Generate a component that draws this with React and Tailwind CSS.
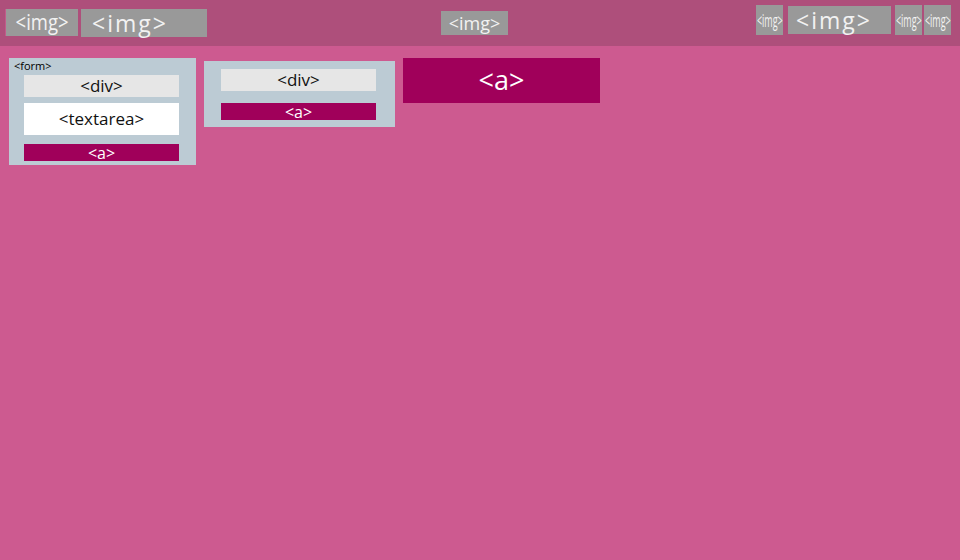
export default function App() {
  const font = { fontFamily: '"Open Sans", "Liberation Sans", sans-serif' };
  return (
    <div className="w-[960px] h-[560px] bg-[#cd5a90] overflow-hidden" style={font}>
      <div className="h-[46px] bg-[#ae4f7b] flex items-start relative">
        <div className="ml-[5px] mt-[9px] w-[73px] h-[27px] bg-[#999999] border-l border-[#c25a8a] flex items-center justify-center text-[#f2f2f2] leading-none overflow-hidden">
          <span className="inline-block text-[21px] scale-x-[0.88]">&lt;img&gt;</span>
        </div>
        <div className="ml-[3px] mt-[9px] w-[126px] h-[28px] bg-[#999999] flex items-center pl-[11px] text-[23px] tracking-[2px] text-[#f2f2f2] leading-none">&lt;img&gt;</div>
        <div className="ml-[234px] mt-[11px] w-[67px] h-[24px] bg-[#999999] flex items-center justify-center text-[18px] text-[#f2f2f2] leading-none">&lt;img&gt;</div>
        <div className="ml-auto mr-[9px] mt-[5px] flex items-start">
          <Tiny />
          <div className="ml-[5px] mt-[1px] w-[103px] h-[28px] bg-[#999999] flex items-center pl-[8px] text-[23px] tracking-[2px] text-[#f2f2f2] leading-none">&lt;img&gt;</div>
          <div className="ml-[4px]"><Tiny /></div>
          <div className="ml-[2px]"><Tiny /></div>
        </div>
      </div>
      <div className="flex items-start pl-[9px] gap-2">
        <div className="mt-[12px] w-[187px] h-[107px] bg-[#bccbd4] flex flex-col">
          <div className="pl-[5px] pt-[1px] text-[11px] leading-[13px] text-black">&lt;form&gt;</div>
          <div className="ml-[15px] mt-[3px] w-[155px] h-[22px] bg-[#e6e6e6] flex items-center justify-center text-[17px] text-[#111]">&lt;div&gt;</div>
          <div className="ml-[15px] mt-[6px] w-[155px] h-[32px] bg-white flex items-center justify-center text-[17px] text-[#111]">&lt;textarea&gt;</div>
          <div className="ml-[15px] mt-[9px] w-[155px] h-[17px] bg-[#a0005a] flex items-center justify-center text-[16px] text-white">&lt;a&gt;</div>
        </div>
        <div className="mt-[15px] w-[191px] h-[66px] bg-[#bccbd4] flex flex-col">
          <div className="ml-[17px] mt-[8px] w-[155px] h-[22px] bg-[#e6e6e6] flex items-center justify-center text-[17px] text-[#111]">&lt;div&gt;</div>
          <div className="ml-[17px] mt-[12px] w-[155px] h-[17px] bg-[#a0005a] flex items-center justify-center text-[16px] text-white">&lt;a&gt;</div>
        </div>
        <div className="mt-[12px] w-[197px] h-[45px] bg-[#a0005a] flex items-center justify-center text-[27px] text-white">&lt;a&gt;</div>
      </div>
    </div>
  );
}

function Tiny() {
  return (
    <div className="w-[27px] h-[30px] bg-[#999999] flex items-center justify-center overflow-hidden">
      <span className="inline-block text-[18px] text-[#f2f2f2] leading-none scale-x-[0.5]">&lt;img&gt;</span>
    </div>
  );
}
